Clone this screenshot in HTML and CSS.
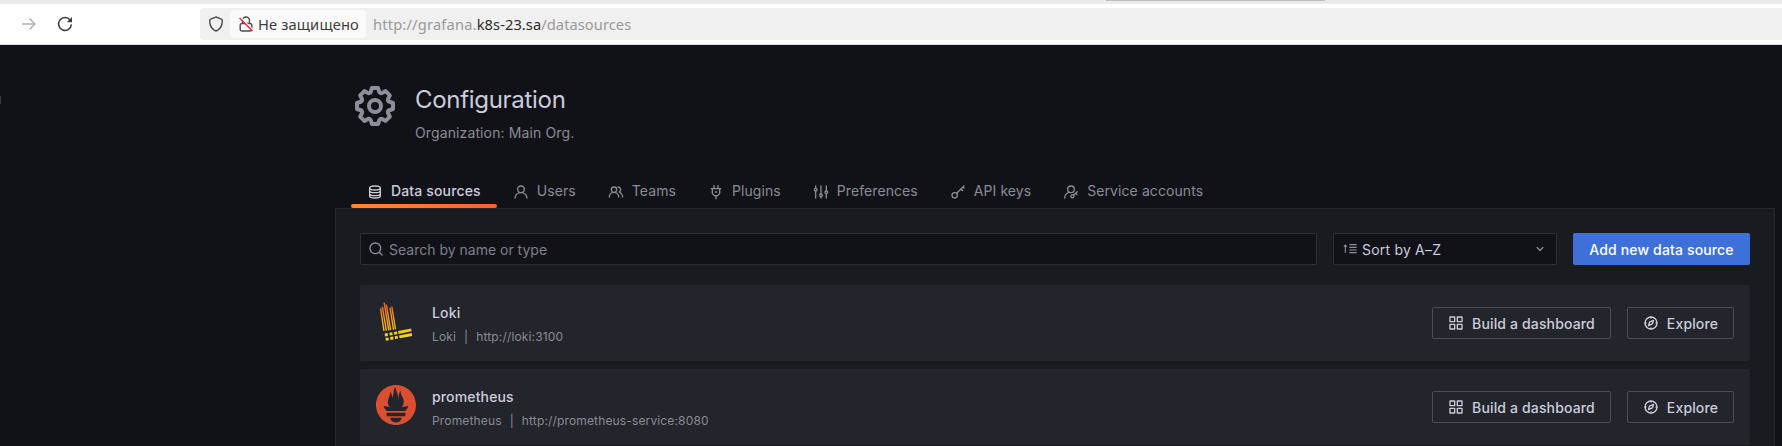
FILE: index.html
```html
<!DOCTYPE html>
<html lang="ru">
<head>
<meta charset="utf-8">
<title>Configuration: Data sources</title>
<link rel="stylesheet" href="styles.css">
</head>
<body>
<svg class="sprite" aria-hidden="true">
  <symbol id="apps" viewBox="0 0 24 24"><path d="M10,13H3a1,1,0,0,0-1,1v7a1,1,0,0,0,1,1h7a1,1,0,0,0,1-1V14A1,1,0,0,0,10,13ZM9,20H4V15H9ZM21,2H14a1,1,0,0,0-1,1v7a1,1,0,0,0,1,1h7a1,1,0,0,0,1-1V3A1,1,0,0,0,21,2ZM20,9H15V4h5Zm1,4H14a1,1,0,0,0-1,1v7a1,1,0,0,0,1,1h7a1,1,0,0,0,1-1V14A1,1,0,0,0,21,13Zm-1,7H15V15h5ZM10,2H3A1,1,0,0,0,2,3v7a1,1,0,0,0,1,1h7a1,1,0,0,0,1-1V3A1,1,0,0,0,10,2ZM9,9H4V4H9Z"/></symbol>
  <symbol id="compass" viewBox="0 0 24 24"><g fill="none" stroke="currentColor" stroke-width="2" stroke-linejoin="round" stroke-linecap="round"><circle cx="12" cy="12" r="9"/><path d="M15.8 8.2l-1.7 5-5.9 2.6 1.7-5zM12 3v1.5M12 19.5V21M3 12h1.5M19.500 12H21"/></g></symbol>
</svg>
<header class="browser">
  <div class="tabstrip"><div class="tab-edge"></div></div>
  <div class="toolbar">
    <div class="nav">
      <svg class="fwd" width="16" height="16" viewBox="0 0 16 16"><path d="M1 8h13M8.500 2.500L14 8l-5.500 5.500"/></svg>
      <svg class="reload" width="16" height="16" viewBox="0 0 16 16"><path d="M13.200 4.200A6.400 6.400 0 1 0 14.400 8.400"/><path class="solid" d="M15 1v5.200H9.800z"/></svg>
    </div>
    <div class="urlbar">
      <svg class="shield" width="16" height="16" viewBox="0 0 16 16"><path d="M8 1L14 3.400C14.900 8.500 12.300 13 8 15.200 3.700 13 1.100 8.500 2 3.400z"/></svg>
      <div class="chip">
        <svg width="16" height="16" viewBox="0 0 16 16"><path class="lock" d="M4.500 7V4.500a3.500 3.500 0 0 1 7 0V7M4 7.500h8a1.800 1.800 0 0 1 1.800 1.800v3.900A1.800 1.800 0 0 1 12 15H4a1.800 1.800 0 0 1-1.800-1.800V9.300A1.800 1.800 0 0 1 4 7.500z"/><path class="slash-gap" d="M2.500 1.500l13 13"/><path class="slash" d="M1.500 2l13 13"/></svg>
        <span class="chip-text">Не защищено</span>
      </div>
      <div class="url"><span class="u1">http://grafana.</span><span class="u2">k8s-23.sa</span><span class="u3">/datasources</span></div>
    </div>
  </div>
</header>
<main class="page">
  <div class="edge-handle"></div>
  <div class="title-row">
    <svg class="gear" width="48" height="48" viewBox="0 0 24 24"><path d="M21.320,9.550l-1.890-.63.890-1.780A1,1,0,0,0,20.130,6L18,3.870a1,1,0,0,0-1.150-.19l-1.780.89-.63-1.890A1,1,0,0,0,13.500,2h-3a1,1,0,0,0-.95.680L8.920,4.570,7.140,3.680A1,1,0,0,0,6,3.870L3.870,6a1,1,0,0,0-.19,1.150l.89,1.780-1.890.63A1,1,0,0,0,2,10.500v3a1,1,0,0,0,.68.950l1.890.63-.89,1.780A1,1,0,0,0,3.870,18L6,20.130a1,1,0,0,0,1.150.19l1.780-.89.63,1.890a1,1,0,0,0,.95.680h3a1,1,0,0,0,.95-.68l.63-1.890,1.780.89A1,1,0,0,0,18,20.130L20.130,18a1,1,0,0,0,.19-1.150l-.89-1.780,1.890-.63A1,1,0,0,0,22,13.500v-3A1,1,0,0,0,21.320,9.550ZM20,12.780l-1.200.4A2,2,0,0,0,17.640,16l.57,1.140-1.100,1.100L16,17.640a2,2,0,0,0-2.790,1.160l-.4,1.200H11.220l-.4-1.200A2,2,0,0,0,8,17.640l-1.140.57-1.100-1.100L6.360,16A2,2,0,0,0,5.200,13.180L4,12.780V11.220l1.200-.4A2,2,0,0,0,6.360,8L5.790,6.890l1.100-1.100L8,6.360A2,2,0,0,0,10.820,5.200l.4-1.200h1.560l.4,1.200A2,2,0,0,0,16,6.360l1.140-.57,1.100,1.100L17.640,8a2,2,0,0,0,1.160,2.790l1.200.4ZM12,8a4,4,0,1,0,4,4A4,4,0,0,0,12,8Zm0,6a2,2,0,1,1,2-2A2,2,0,0,1,12,14Z"/></svg>
    <div class="titles">
      <h1>Configuration</h1>
      <div class="subtitle">Organization: Main Org.</div>
    </div>
  </div>
  <nav class="tabs">
    <a class="tab active"><svg viewBox="0 0 24 24"><g class="ln"><path d="M4 6c0-2 3.500-3 8-3s8 1 8 3v12c0 2-3.500 3-8 3s-8-1-8-3zM4 6c0 2 3.500 3 8 3s8-1 8-3M4 10c0 2 3.500 3 8 3s8-1 8-3M4 14.500c0 2 3.500 3 8 3s8-1 8-3"/></g></svg>Data sources</a>
    <a class="tab"><svg viewBox="0 0 24 24"><path d="M15.710,12.710a6,6,0,1,0-7.420,0,10,10,0,0,0-6.220,8.180,1,1,0,0,0,2,.22,8,8,0,0,1,15.900,0,1,1,0,0,0,1,.89h.11a1,1,0,0,0,.88-1.100A10,10,0,0,0,15.710,12.710ZM12,12a4,4,0,1,1,4-4A4,4,0,0,1,12,12Z"/></svg>Users</a>
    <a class="tab"><svg viewBox="0 0 24 24"><path d="M12.300,12.220A4.920,4.920,0,0,0,14,8.500a5,5,0,0,0-10,0,4.920,4.920,0,0,0,1.700,3.720A8,8,0,0,0,1,19.500a1,1,0,0,0,2,0,6,6,0,0,1,12,0,1,1,0,0,0,2,0A8,8,0,0,0,12.300,12.220ZM9,11.500a3,3,0,1,1,3-3A3,3,0,0,1,9,11.500Zm9.740.32A5,5,0,0,0,15,3.500a1,1,0,0,0,0,2,3,3,0,0,1,3,3,3,3,0,0,1-1.500,2.590,1,1,0,0,0-.5.840,1,1,0,0,0,.45.860l.39.260.13.070a7,7,0,0,1,4,6.380,1,1,0,0,0,2,0A9,9,0,0,0,18.740,11.820Z"/></svg>Teams</a>
    <a class="tab"><svg viewBox="0 0 24 24"><g class="ln"><path d="M5 7h14M9 2.500v4M15 2.500v4M6.500 7v7l3 3.500h5l3-3.500V7M12 17.500V22M11 12h2"/></g></svg>Plugins</a>
    <a class="tab"><svg viewBox="0 0 24 24"><g class="ln"><path d="M4 3v3M4 11v10M12 3v11.500M12 19.500V21M20 3v7M20 15v6"/><circle cx="4" cy="8.500" r="2"/><circle cx="12" cy="17" r="2"/><circle cx="20" cy="12.500" r="2"/></g></svg>Preferences</a>
    <a class="tab"><svg viewBox="0 0 24 24"><g class="ln"><circle cx="7" cy="17" r="4"/><path d="M10 14L21 3M16.500 7.500l2.500 2.500M19.500 4.500L21 6"/></g></svg>API keys</a>
    <a class="tab"><svg viewBox="0 0 24 24"><g class="ln"><circle cx="12" cy="8" r="5"/><path d="M2.500 21c.4-4.500 3-7.500 7-8.300M16 16.500l5.500-5M19 13.800l2 2"/><circle cx="14" cy="18.500" r="2.300"/></g></svg>Service accounts</a>
  </nav>
  <section class="panel">
    <div class="filters">
      <div class="search"><svg viewBox="0 0 24 24"><path d="M21.710,20.290,18,16.610A9,9,0,1,0,16.610,18l3.680,3.680a1,1,0,0,0,1.420,0A1,1,0,0,0,21.710,20.290ZM11,18a7,7,0,1,1,7-7A7,7,0,0,1,11,18Z"/></svg><span>Search by name or type</span></div>
      <div class="select"><svg class="sort" viewBox="0 0 24 24"><path class="sort-lines" d="M5 17.500V6.500M2.800 8.500L5 6l2.200 2.500M11 5.500h11M11 9.500h11M11 13.500h11M11 17.500h11"/></svg><span>Sort by A–Z</span><svg class="chev" viewBox="0 0 24 24"><path d="M17,9.170a1,1,0,0,0-1.410,0L12,12.710,8.460,9.170a1,1,0,0,0-1.410,0,1,1,0,0,0,0,1.420l4.240,4.240a1,1,0,0,0,1.420,0L17,10.590A1,1,0,0,0,17,9.170Z"/></svg></div>
      <button class="primary"><span>Add new data source</span></button>
    </div>
    <div class="cards">
      <article class="card">
        <svg class="logo" viewBox="0 0 120 120">
          <defs><linearGradient id="flame" gradientUnits="userSpaceOnUse" x1="0" y1="0" x2="0" y2="100"><stop offset="0" stop-color="#f05a28"/><stop offset="1" stop-color="#fcd01c"/></linearGradient></defs>
          <g fill="none" stroke="url(#flame)">
            <path stroke-width="4.200" d="M13.500 22l10.500 68M19 17l12 72M24.500 5l14 83M31 11l13 76M42 20l10.500 66M47.500 17l11 68"/>
            <path stroke-width="8.500" d="M26.500 102l9-1.500M40.500 99.500l9-1.500M54.500 97l9-1.500M67 94.500l39-8M29 115l9-1.500M43 112.500l9-1.500M56.500 110l9-1.500M70 107.500l38-7"/>
          </g>
        </svg>
        <div class="info"><h2>Loki</h2><div class="meta"><span>Loki</span><i>|</i><span>http://loki:3100</span></div></div>
        <button class="outline"><svg><use href="#apps"/></svg><span>Build a dashboard</span></button>
        <button class="outline"><svg><use href="#compass"/></svg><span>Explore</span></button>
      </article>
      <article class="card">
        <svg class="logo" viewBox="0 0 24 24"><path fill="#da4e31" d="M12 0C5.373 0 0 5.372 0 12c0 6.627 5.373 12 12 12s12-5.373 12-12c0-6.628-5.373-12-12-12zm0 22.460c-1.885 0-3.414-1.260-3.414-2.814h6.828c0 1.553-1.528 2.813-3.414 2.813zm5.640-3.745H6.360v-2.046h11.280v2.046zm-.04-3.098H6.391c-.037-.043-.075-.086-.111-.13-1.155-1.401-1.427-2.133-1.690-2.879-.005-.025 1.400.287 2.395.511 0 0 .513.119 1.262.255-.72-.843-1.147-1.915-1.147-3.010 0-2.406 1.845-4.508 1.180-6.207.648.053 1.340 1.367 1.387 3.422.689-.951.977-2.690.977-3.755 0-1.103.727-2.385 1.454-2.429-.648 1.069.168 1.984.894 4.256.272.854.237 2.290.447 3.201.07-1.892.395-4.652 1.595-5.605-.529 1.200.079 2.702.494 3.424.671 1.164 1.078 2.047 1.078 3.716a4.642 4.642 0 01-1.110 2.996c.792-.149 1.340-.283 1.340-.283l2.573-.502s-.374 1.538-1.810 3.019z"/></svg>
        <div class="info"><h2>prometheus</h2><div class="meta"><span>Prometheus</span><i>|</i><span>http://prometheus-service:8080</span></div></div>
        <button class="outline"><svg><use href="#apps"/></svg><span>Build a dashboard</span></button>
        <button class="outline"><svg><use href="#compass"/></svg><span>Explore</span></button>
      </article>
    </div>
  </section>
</main>
</body>
</html>
```
FILE: styles.css
```css
* { box-sizing: border-box; }
body { margin: 0; height: 446px; overflow: hidden; background: #111217; color: #ccccdc; font: 14px/22px Inter, "Liberation Sans", sans-serif; letter-spacing: 0.15px; }
svg { display: block; flex: none; fill: currentColor; }
.sprite { display: none; }
.ln { fill: none; stroke: currentColor; stroke-width: 2; stroke-linecap: round; stroke-linejoin: round; }

.browser { height: 45px; background: #fff; border-bottom: 1px solid #e0e0e0; font: 14.67px/20px "Noto Sans", sans-serif; letter-spacing: 0; }
.tabstrip { height: 4px; background: #ebebeb; }
.tab-edge { width: 219px; height: 1px; margin-left: 1106px; background: #bdbdbd; }
.toolbar { display: flex; padding-top: 4px; }
.nav { width: 200px; height: 32px; display: flex; align-items: center; gap: 20px; padding-left: 21px; }
.fwd { fill: none; stroke: #b3b3b3; stroke-width: 1.5; }
.reload { fill: none; stroke: #3d3d3d; stroke-width: 1.5; }
.reload .solid { fill: #3d3d3d; stroke: none; }
.urlbar { flex: 1; height: 32px; background: #f0f0f0; border-radius: 4px 0 0 4px; display: flex; align-items: center; padding-left: 8px; color: #3d3d3d; }
.shield { fill: none; stroke: #4d4d4d; stroke-width: 1.4; margin-right: 6px; }
.chip { width: 136px; height: 28px; background: #fafafa; border-radius: 4px; display: flex; align-items: center; gap: 4px; padding-left: 8px; white-space: nowrap; }
.chip-text { letter-spacing: 0.15px; }
.lock { fill: none; stroke: #4d4d4d; stroke-width: 1.4; }
.slash-gap { stroke: #fafafa; stroke-width: 1.4; }
.slash { stroke: #e22850; stroke-width: 1.4; }
.url { display: flex; margin-left: 7px; color: #999; white-space: nowrap; }
.u1 { letter-spacing: 0.18px; }
.u2 { color: #2b2b2b; letter-spacing: 0.08px; }
.u3 { letter-spacing: 0.06px; }

.page { position: relative; padding: 37px 7px 0 335px; }
.edge-handle { position: absolute; left: 0; top: 51px; width: 1px; height: 8px; background: #3a3b41; }
.title-row { display: flex; gap: 16px; padding-left: 16px; height: 91px; }
.gear { color: #8e8e9b; }
h1 { margin: 4px 0 0; font-size: 24px; line-height: 28px; font-weight: 400; letter-spacing: -0.3px; }
.subtitle { margin-top: 9px; line-height: 20px; color: #8a8b96; letter-spacing: 0.12px; }
.tabs { display: flex; height: 35px; padding-left: 16px; color: #8a8b96; letter-spacing: 0.08px; }
.tab { display: flex; align-items: center; gap: 8px; padding: 0 16px; white-space: nowrap; }
.tab svg { width: 16px; height: 16px; margin-top: 3px; }
.active { position: relative; color: #ccccdc; font-weight: 500; letter-spacing: 0.15px; }
.active::after { content: ""; position: absolute; left: 0; right: 0; bottom: 0; height: 4px; border-radius: 2px; background: linear-gradient(90deg, #ff8833, #f55f3e); }
.panel { height: 260px; padding: 24px; background: #181b1f; border: 1px solid #25272c; }
.filters { display: flex; gap: 16px; height: 32px; }
.search, .select { border: 1px solid #2d2e34; border-radius: 2px; background: #111217; display: flex; align-items: center; }
.search { flex: 1; gap: 5px; padding-left: 7px; color: #7e7f8a; letter-spacing: 0; }
.search svg, .select svg { width: 16px; height: 16px; color: #8e8e9b; }
.search span, .select span, button span { padding-top: 1px; }
.select { width: 224px; padding: 0 8px; gap: 4px; letter-spacing: 0.2px; }
.sort-lines { fill: none; stroke: currentColor; stroke-width: 1.7; }
.chev { margin-left: auto; }
button { display: flex; align-items: center; justify-content: center; gap: 8px; height: 32px; padding: 0; margin: 0; border: 0; border-radius: 2px; font: 500 14px/22px Inter, sans-serif; letter-spacing: 0.15px; white-space: nowrap; }
.primary { width: 177px; background: #3d71d9; color: #fff; }
.cards { display: grid; gap: 8px; margin-top: 20px; }
.card { display: flex; align-items: center; gap: 16px; height: 76px; padding: 0 16px; background: #22252b; border-radius: 2px; }
.logo { width: 40px; height: 40px; margin-top: -4px; }
.info { flex: 1; padding-top: 4px; }
h2 { margin: 0; font-size: 14px; line-height: 22px; font-weight: 500; }
.meta { display: flex; margin-top: 2px; font-size: 12px; line-height: 22px; color: #8a8b96; }
.meta i { font-style: normal; margin: 0 8px; }
.outline { width: 179px; background: transparent; color: #ccccdc; border: 1px solid #4b4d56; }
.outline + .outline { width: 107px; }
.outline svg { width: 16px; height: 16px; }
```
